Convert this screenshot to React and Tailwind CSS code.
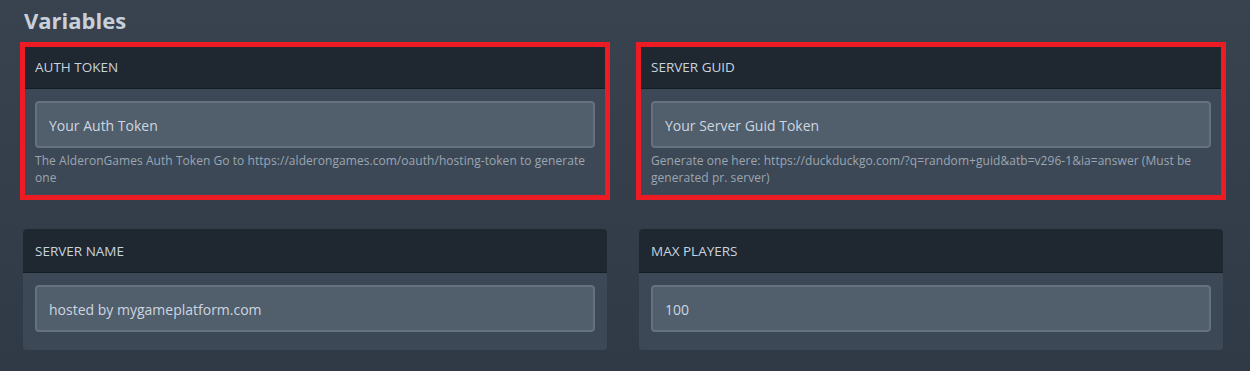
import React from "react";

function Card({ title, value, help, highlight }) {
  return (
    <div
      className={
        "bg-[#3d4856] " +
        (highlight
          ? "outline-[5px] outline-solid outline-[#ed1c24] outline-offset-[-2px] h-[152px] rounded-none"
          : "h-[121px] rounded-[4px]")
      }
    >
      <div
        className={
          "h-[44px] bg-[#1f2731] border-b border-[#161c23] flex items-center px-3 pt-[2px] text-[13.5px] text-[#c9d3de] " +
          (highlight ? "" : "rounded-t-[4px]")
        }
      >
        {title}
      </div>
      <div className="px-3 pt-3">
        <div className="h-[47px] rounded-[4px] bg-[#515e6b] border-2 border-[#64717e] flex items-center px-3 pt-[2px] text-[14px] text-[#cdd6e0]">
          {value}
        </div>
        {help && (
          <div className="mt-[4px] text-[12px] leading-[17px] tracking-[0.05px] text-[#9ba6b2]">
            {help}
          </div>
        )}
      </div>
    </div>
  );
}

export default function App() {
  return (
    <div
      className="w-[1250px] h-[371px] overflow-hidden bg-gradient-to-b from-[#39434f] to-[#303a46] pl-[23px] pr-[27px]"
      style={{ fontFamily: '"Open Sans", "Noto Sans", sans-serif' }}
    >
      <h1 className="pt-[5px] h-[45px] text-[22px] font-bold text-[#c8d0da] leading-[30px] pl-[1px]">
        Variables
      </h1>
      <div className="grid grid-cols-2 gap-x-8 gap-y-8">
        <Card
          highlight
          title="AUTH TOKEN"
          value="Your Auth Token"
          help="The AlderonGames Auth Token Go to https://alderongames.com/oauth/hosting-token to generate one"
        />
        <Card
          highlight
          title="SERVER GUID"
          value="Your Server Guid Token"
          help="Generate one here: https://duckduckgo.com/?q=random+guid&atb=v296-1&ia=answer (Must be generated pr. server)"
        />
        <Card title="SERVER NAME" value="hosted by mygameplatform.com" />
        <Card title="MAX PLAYERS" value="100" />
      </div>
    </div>
  );
}
